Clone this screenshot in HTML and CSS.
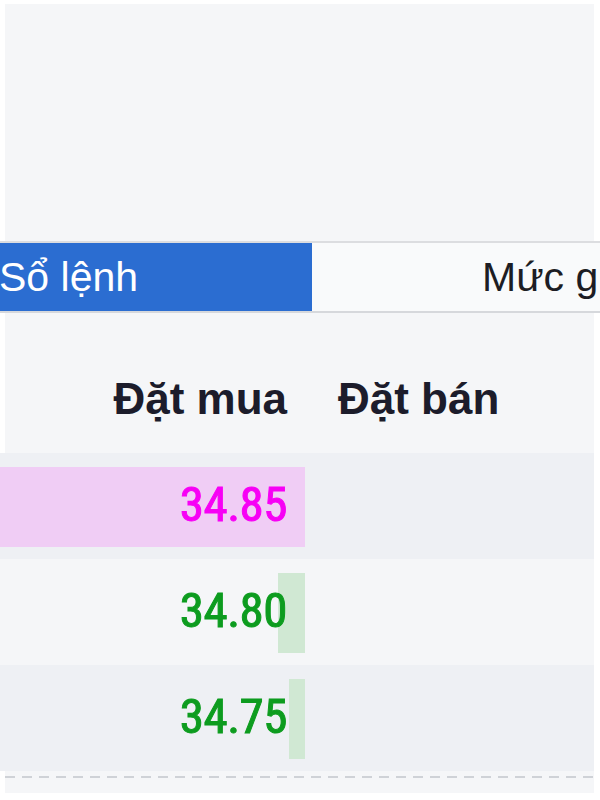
FILE: index.html
```html
<!DOCTYPE html>
<html lang="vi">

<head>
    <meta charset="UTF-8">
    <meta name="viewport" content="width=device-width, initial-scale=1.0">
    <title>Sổ lệnh</title>
    <link rel="stylesheet" href="styles.css">
</head>

<body>
    <div class="panel">
        <div class="chart-area"></div>

        <div class="tabs">
            <div class="tab active">Sổ lệnh</div>
            <div class="tab">Mức giá</div>
        </div>

        <div class="book">
            <div class="book-head">
                <div class="col-buy">Đặt mua</div>
                <div class="col-sell">Đặt bán</div>
            </div>

            <div class="book-row">
                <div class="col-buy">
                    <span class="bar bar-ref" style="width: 305px;"></span>
                    <span class="price ref">34.85</span>
                </div>
                <div class="col-sell"></div>
            </div>
            <div class="book-row">
                <div class="col-buy">
                    <span class="bar bar-up" style="width: 27px;"></span>
                    <span class="price up">34.80</span>
                </div>
                <div class="col-sell"></div>
            </div>
            <div class="book-row">
                <div class="col-buy">
                    <span class="bar bar-up" style="width: 16px;"></span>
                    <span class="price up">34.75</span>
                </div>
                <div class="col-sell"></div>
            </div>

            <div class="divider"></div>
        </div>
    </div>
</body>

</html>
```

FILE: styles.css
```css
body {
    margin: 0;
    background-color: #fff;
    font-family: 'Liberation Sans', Arial, sans-serif;
    overflow: hidden;
}

.panel {
    margin: 4px 6px 0 5px;
    height: 789px;
    background-color: #f5f6f8;
}

.chart-area {
    height: 237px;
}

/* tab bar */
.tabs {
    display: flex;
    margin: 0 -6px 0 -5px;
    height: 68px;
    border-top: 2px solid #dcdde0;
    border-bottom: 2px solid #d6d8dc;
    overflow: hidden;
}

.tab {
    display: flex;
    align-items: center;
    font-size: 41px;
    color: #1d1d24;
    background-color: #f9fafb;
    white-space: nowrap;
}

.tab.active {
    width: 312px;
    flex-shrink: 0;
    background-color: #2b6dd1;
    color: #fff;
    text-indent: -1px;
}

.tab:not(.active) {
    flex: 1;
    padding-left: 170px;
}

/* order book */
.book {
    margin-left: -5px;
}

.book-head,
.book-row {
    display: grid;
    grid-template-columns: 305px 1fr;
}

.book-head {
    padding: 64px 0 32px;
    font-size: 44px;
    font-weight: bold;
    line-height: 44px;
    color: #1c1c2b;
}

.col-buy {
    position: relative;
    padding-right: 18px;
    text-align: right;
}

.col-sell {
    padding-left: 33px;
}

.book-row {
    height: 106px;
    background-color: #f5f6f8;
}

.book-row:nth-of-type(2n) {
    background-color: #eef0f4;
}

.book-row .col-buy {
    display: flex;
    align-items: center;
    justify-content: flex-end;
}

.bar {
    position: absolute;
    top: 14px;
    bottom: 12px;
    right: 0;
}

.bar-ref {
    background-color: #f0cdf5;
}

.bar-up {
    background-color: #d0e8d3;
}

.price {
    position: relative;
    top: -2px;
    font-family: 'Liberation Sans Narrow', 'Roboto Condensed', 'Liberation Sans', sans-serif;
    font-size: 49px;
    line-height: 1;
    letter-spacing: -0.5px;
    -webkit-text-stroke: 1px currentColor;
}

.ref {
    color: #f700f5;
}

.up {
    color: #0d9c1f;
}

.divider {
    height: 2px;
    margin: 5px 0 0 5px;
    background-image: repeating-linear-gradient(90deg, #cfd2d7 0, #cfd2d7 10px, transparent 10px, transparent 17px);
}
```
